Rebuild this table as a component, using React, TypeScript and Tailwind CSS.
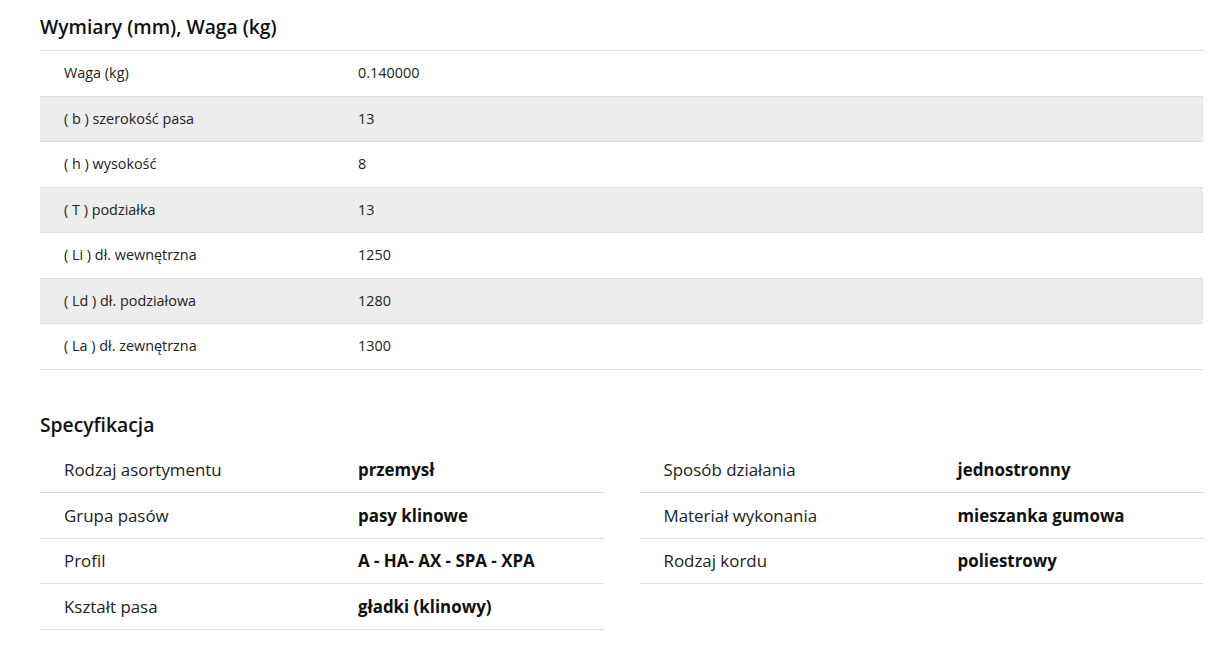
const dims: [string, string][] = [
  ['Waga (kg)', '0.140000'],
  ['( b ) szerokość pasa', '13'],
  ['( h ) wysokość', '8'],
  ['( T ) podziałka', '13'],
  ['( Li ) dł. wewnętrzna', '1250'],
  ['( Ld ) dł. podziałowa', '1280'],
  ['( La ) dł. zewnętrzna', '1300'],
];

const specLeft: [string, string][] = [
  ['Rodzaj asortymentu', 'przemysł'],
  ['Grupa pasów', 'pasy klinowe'],
  ['Profil', 'A - HA- AX - SPA - XPA'],
  ['Kształt pasa', 'gładki (klinowy)'],
];

const specRight: [string, string][] = [
  ['Sposób działania', 'jednostronny'],
  ['Materiał wykonania', 'mieszanka gumowa'],
  ['Rodzaj kordu', 'poliestrowy'],
];

function SpecColumn({ rows }: { rows: [string, string][] }) {
  return (
    <div className="flex flex-col">
      {rows.map(([label, value]) => (
        <div
          key={label}
          className="flex items-center h-[45.5px] border-b border-[#dedede] text-[16.9px]"
        >
          <div className="w-[318px] pl-6 text-[#222]">{label}</div>
          <div className="font-bold text-[#111]">{value}</div>
        </div>
      ))}
    </div>
  );
}

export default function App() {
  return (
    <div
      className="min-h-screen bg-white pl-[40px] pr-[29px] pt-[13px]"
      style={{ fontFamily: '"Open Sans", "Noto Sans", sans-serif' }}
    >
      <h2 className="text-[19.3px] leading-[28px] font-semibold text-[#111] mb-[9px]">
        Wymiary (mm), Waga (kg)
      </h2>
      <div className="border-t border-[#dedede]">
        {dims.map(([label, value], i) => (
          <div
            key={label}
            className={`flex items-center h-[45.5px] border-b border-[#dedede] text-[14.4px] text-[#222] ${
              i % 2 === 1 ? 'bg-[#ededed]' : 'bg-white'
            }`}
          >
            <div className="w-[318px] pl-6">{label}</div>
            <div>{value}</div>
          </div>
        ))}
      </div>

      <h2 className="mt-[41.5px] text-[19.3px] leading-[28px] font-semibold text-[#111] mb-[8.5px]">
        Specyfikacja
      </h2>
      <div className="grid grid-cols-2 gap-x-[36px]">
        <SpecColumn rows={specLeft} />
        <SpecColumn rows={specRight} />
      </div>
    </div>
  );
}
